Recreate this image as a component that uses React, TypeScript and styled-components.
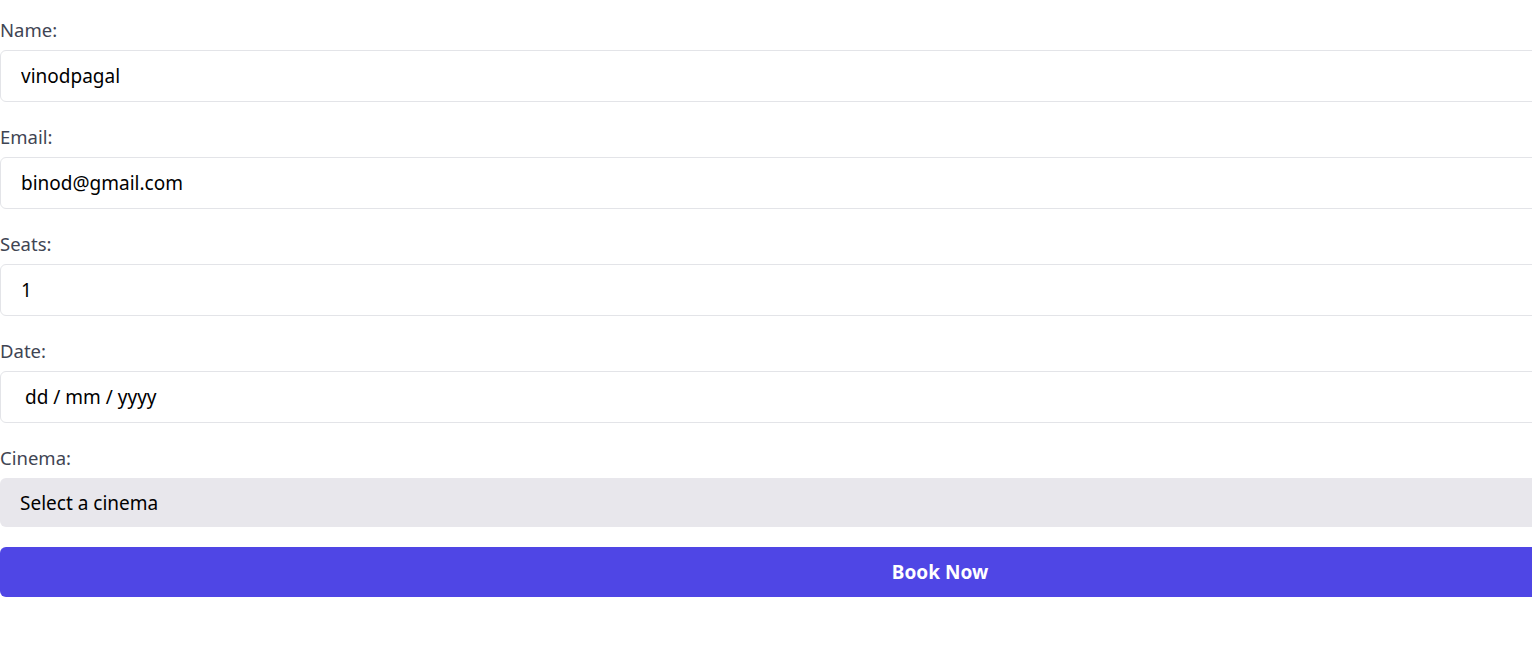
import React from "react";
import styled, { createGlobalStyle } from "styled-components";

const Global = createGlobalStyle`
  html, body { margin: 0; padding: 0; background: #ffffff; }
  body { font-family: "Noto Sans", "Open Sans", sans-serif; overflow: hidden; }
  * { box-sizing: border-box; }
`;

const Form = styled.form`
  width: 1880px;
  padding-top: 16px;
  display: flex;
  flex-direction: column;
`;

const Field = styled.div<{ $gap?: number }>`
  display: flex;
  flex-direction: column;
  margin-bottom: ${(p) => p.$gap ?? 21}px;
`;

const Label = styled.label`
  font-size: 18.5px;
  line-height: 28px;
  color: #3f4553;
  margin-bottom: 6px;
`;

const Input = styled.input<{ $indent?: number }>`
  height: 52px;
  width: 100%;
  border: 1px solid #e3e4e8;
  border-radius: 6px;
  padding: 0 0 0 ${(p) => p.$indent ?? 20}px;
  font-family: inherit;
  font-size: 19px;
  color: #000;
  background: #fff;
  outline: none;
`;

const Select = styled.select`
  height: 49px;
  width: 100%;
  border: none;
  border-radius: 6px;
  padding: 0 0 0 20px;
  font-family: inherit;
  font-size: 19px;
  color: #000;
  background: #e8e7ec;
  appearance: none;
  outline: none;
`;

const Button = styled.button`
  height: 50px;
  width: 100%;
  border: none;
  border-radius: 6px;
  background: #4f46e5;
  color: #fff;
  font-family: inherit;
  font-weight: 700;
  font-size: 19px;
`;

export default function App() {
  return (
    <>
      <Global />
      <Form onSubmit={(e) => e.preventDefault()}>
        <Field>
          <Label>Name:</Label>
          <Input defaultValue="vinodpagal" />
        </Field>
        <Field>
          <Label>Email:</Label>
          <Input defaultValue="binod@gmail.com" />
        </Field>
        <Field>
          <Label>Seats:</Label>
          <Input defaultValue="1" />
        </Field>
        <Field>
          <Label>Date:</Label>
          <Input $indent={24} defaultValue="dd / mm / yyyy" />
        </Field>
        <Field $gap={20}>
          <Label>Cinema:</Label>
          <Select defaultValue="">
            <option value="">Select a cinema</option>
          </Select>
        </Field>
        <Button type="submit">Book Now</Button>
      </Form>
    </>
  );
}
